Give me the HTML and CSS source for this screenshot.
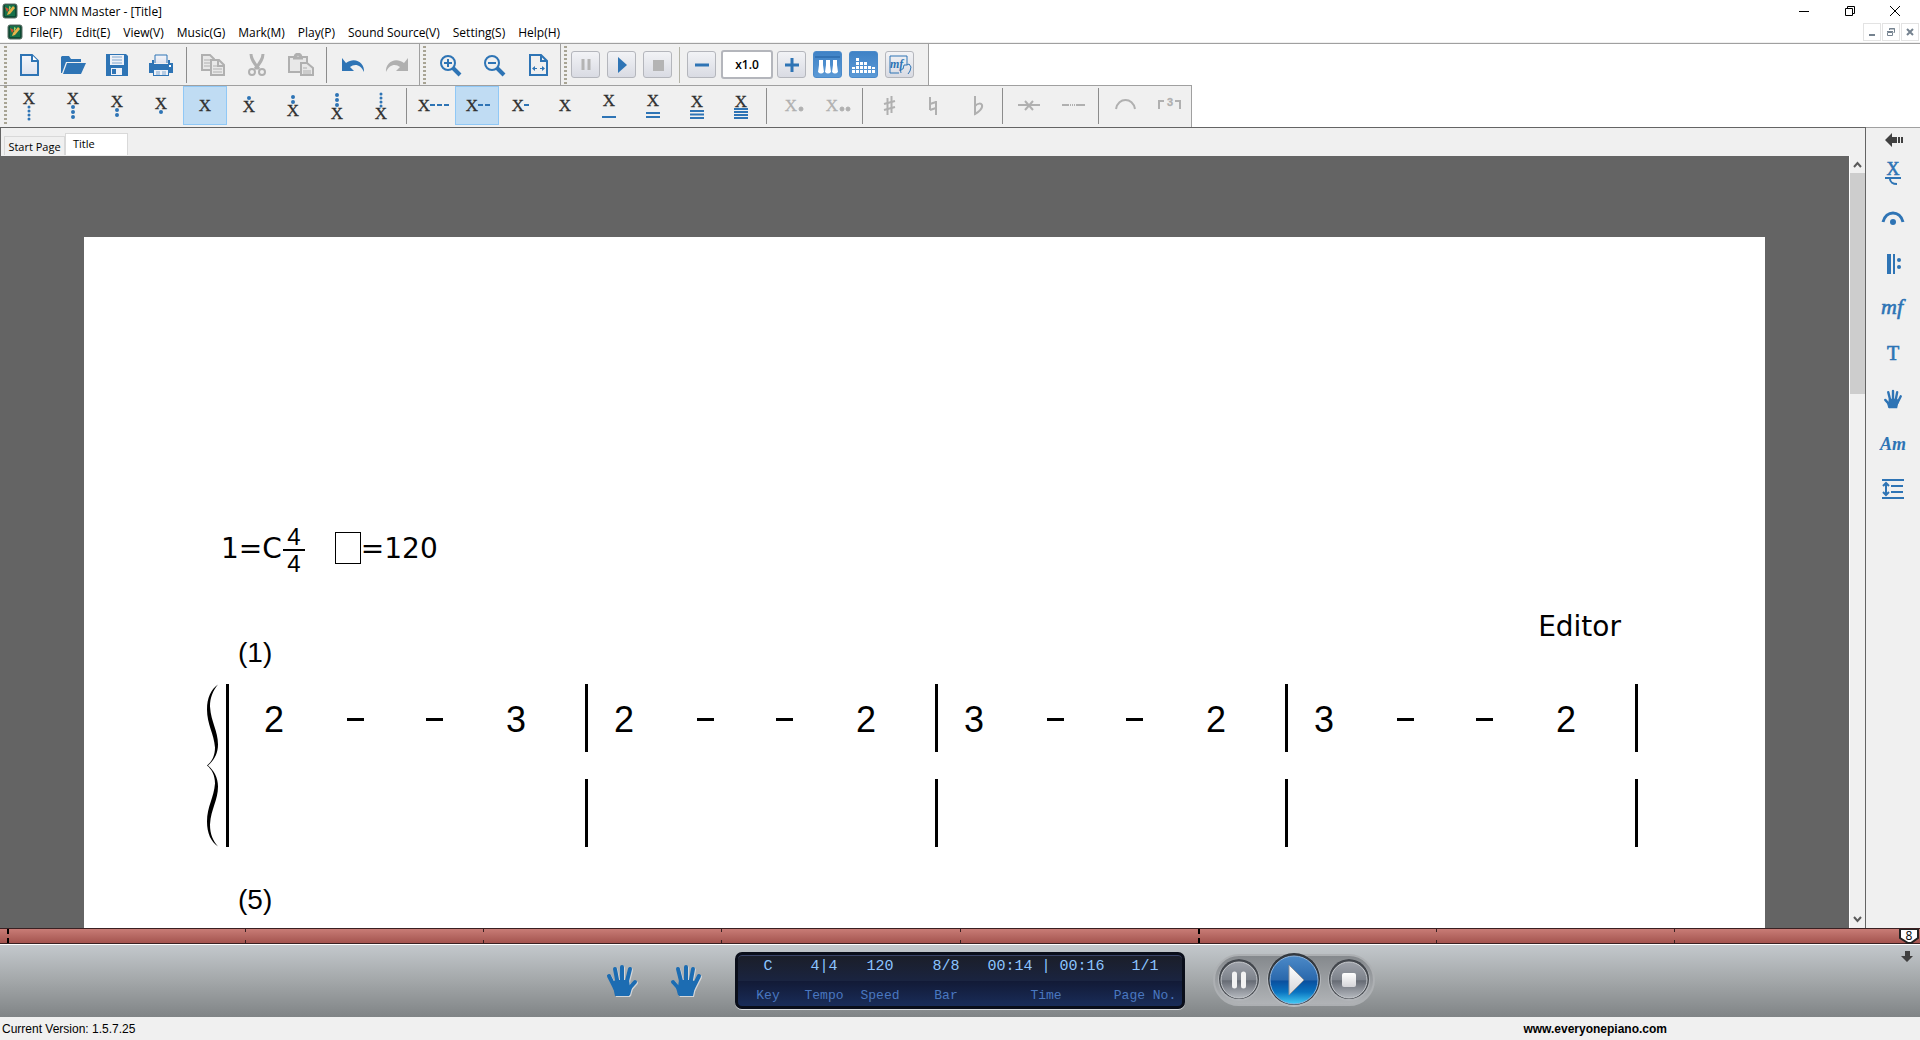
FILE: index.html
```html
<!DOCTYPE html>
<html lang="en">
<head>
<meta charset="utf-8">
<title>EOP NMN Master - [Title]</title>
<link rel="stylesheet" href="styles.css">
</head>
<body>
<svg class="defs" aria-hidden="true">
  <defs>
    <symbol id="logo" viewBox="0 0 16 16">
      <rect x="1" y="1" width="14" height="14" rx="2" fill="#0d4a33" stroke="#5d6f66"/>
      <rect x="3" y="2" width="10" height="11" fill="#16704a"/>
      <path d="M6 9l5-6 2 2-5 6-3 1z" fill="#e9b44a"/>
      <path d="M3 4l4 2-2 3z" fill="#d5502c"/>
      <path d="M7 3l2 1-2 4z" fill="#9fd46a"/>
    </symbol>
    <symbol id="hand" viewBox="0 0 32 34">
      <g fill="none" stroke="currentColor" stroke-width="4" stroke-linecap="round">
        <path d="M3 12l6 12M9 5l3 16M16 3v18M24 5l-4 16"/>
        <path d="M29 18l-8 9"/>
      </g>
      <path d="M6 18l4-2h13l1 7-1 9H9z" fill="currentColor"/>
      <path d="M23 22l4-2-3 11-2 1z" fill="currentColor"/>
    </symbol>
    <linearGradient id="paper" x1="0" y1="0" x2="0" y2="1"><stop offset="0" stop-color="#f4f6fb"/><stop offset="1" stop-color="#dfe3ee"/></linearGradient>
    <linearGradient id="steel" x1="0" y1="0" x2="0" y2="1"><stop offset="0" stop-color="#9ea2aa"/><stop offset=".5" stop-color="#7d828b"/><stop offset=".52" stop-color="#666b74"/><stop offset="1" stop-color="#b4b8be"/></linearGradient>
    <linearGradient id="blue" x1="0" y1="0" x2="0" y2="1"><stop offset="0" stop-color="#4c8ac8"/><stop offset=".5" stop-color="#2a68ac"/><stop offset=".52" stop-color="#0a4f9e"/><stop offset=".75" stop-color="#0a73c0"/><stop offset="1" stop-color="#45cdf5"/></linearGradient>
    <linearGradient id="white" x1="0" y1="0" x2="0" y2="1"><stop offset="0" stop-color="#fff"/><stop offset="1" stop-color="#d4d4d8"/></linearGradient>
  </defs>
</svg>

<header class="titlebar">
  <svg class="logo"><use href="#logo"/></svg>
  <h1 class="caption">EOP NMN Master - [Title]</h1>
  <div class="window-buttons">
    <button aria-label="Minimize"><svg width="12" height="12"><path d="M1 6.500h10" stroke="#000"/></svg></button>
    <button aria-label="Restore"><svg width="12" height="12" fill="none" stroke="#000"><path d="M1.500 3.500h7v7h-7zM3.500 3v-1.500h7v7H9"/></svg></button>
    <button aria-label="Close"><svg width="12" height="12"><path d="M1 1l10 10M11 1L1 11" stroke="#000"/></svg></button>
  </div>
</header>

<nav class="menubar">
  <svg class="logo"><use href="#logo"/></svg>
  <div class="menus">
    <button>File(F)</button><button>Edit(E)</button><button>View(V)</button><button>Music(G)</button><button>Mark(M)</button><button>Play(P)</button><button>Sound Source(V)</button><button>Setting(S)</button><button>Help(H)</button>
  </div>
  <div class="child-buttons">
    <button aria-label="Minimize document"><svg width="10" height="10"><path d="M2 8h6" stroke="#75828f" stroke-width="2"/></svg></button>
    <button aria-label="Restore document"><svg width="10" height="10" fill="none" stroke="#75828f"><path d="M1.500 5.500h5v3h-5zM1 4.500h6M3.500 3V1.500h5v4H7.500M3 2h6"/></svg></button>
    <button aria-label="Close document"><svg width="10" height="10"><path d="M2 2l6 6M8 2L2 8" stroke="#75828f" stroke-width="2"/></svg></button>
  </div>
</nav>

<div class="toolrow">
  <div class="toolbar">
    <i class="grip"></i>
    <button class="tool" aria-label="New"><svg class="icon" viewBox="0 0 28 24"><path d="M6 2h11l6 6v14H6z" fill="url(#paper)" stroke="#2e74b5" stroke-width="2"/><path d="M17 2v6h6" fill="#fff" stroke="#2e74b5" stroke-width="2"/></svg></button>
    <button class="tool" aria-label="Open"><svg class="icon" viewBox="0 0 28 24" fill="#2e74b5"><path d="M2 20V4l1-1h7l2 3h10v3H7L3 20z"/><path d="M8 10h19l-5 11H4z"/></svg></button>
    <button class="tool" aria-label="Save"><svg class="icon" viewBox="0 0 28 24"><path d="M3 1h20l2 2v20H3z" fill="#2e74b5"/><path d="M7 2h14v10H7z" fill="#eef1f7"/><path d="M9 4h10M9 7h10M9 10h10" stroke="#7fa6cf"/><path d="M8 15h11v7H8z" fill="#eef1f7"/><path d="M9 16h4v5H9z" fill="#2e74b5"/></svg></button>
    <button class="tool" aria-label="Print"><svg class="icon" viewBox="0 0 28 24"><path d="M8 10V2h12v8" fill="url(#paper)" stroke="#2e74b5"/><path d="M5 7h2v4h14V7h2v3h3v10h-4v3H6v-3H2V10h3z" fill="#2e74b5"/><path d="M7 17h14v5H7z" fill="#eef1f7"/><path d="M9 19h4M15 19h4M9 21h4M15 21h4" stroke="#7fa6cf"/><path d="M22 12h2v2h-2z" fill="#fff"/></svg></button>
    <i class="sep"></i>
    <button class="tool" aria-label="Copy" disabled><svg class="icon" viewBox="0 0 28 24" fill="#e8e8e8" stroke="#b0b0b0" stroke-width="2"><path d="M3 2h8l4 4v11H3z"/><path d="M5 7h6M5 10h6M5 13h6" stroke-width="1"/><path d="M12 7h8l5 5v10H12z"/><path d="M19 7v6h6" fill="none"/><path d="M14 13h4M14 16h9M14 19h9" stroke-width="1"/></svg></button>
    <button class="tool" aria-label="Cut" disabled><svg class="icon" viewBox="0 0 28 24" fill="none" stroke="#b0b0b0" stroke-width="2"><path d="M8 1c0 5 3 9 8 15M20 1c0 5-3 9-8 15" stroke-width="3"/><circle cx="9" cy="19" r="3"/><circle cx="19" cy="19" r="3"/></svg></button>
    <button class="tool" aria-label="Paste" disabled><svg class="icon" viewBox="0 0 28 24" fill="#e8e8e8" stroke="#b0b0b0" stroke-width="2"><path d="M2 4h18v15H2z"/><path d="M6 5h10M8 5c0-5 6-5 6 0" stroke-width="3"/><path d="M14 10h6l6 5v7H14z"/><path d="M16 15h4M16 18h8M16 20h8" stroke-width="1"/></svg></button>
    <i class="sep"></i>
    <button class="tool" aria-label="Undo"><svg class="icon" viewBox="0 0 28 24" fill="#2e74b5"><path d="M3 5v13h12l-4-4c5-4 11-2 14 5 1-9-9-16-18-9z"/></svg></button>
    <button class="tool" aria-label="Redo" disabled><svg class="icon" viewBox="0 0 28 24" fill="#b0b0b0"><path d="M25 5v13H13l4-4c-5-4-11-2-14 5C2 10 12 3 21 10z"/></svg></button>
  </div>
  <div class="toolbar">
    <i class="grip"></i>
    <button class="tool" aria-label="Zoom in"><svg class="icon" viewBox="0 0 28 24" fill="none" stroke="#2e74b5"><circle cx="12" cy="10" r="7" stroke-width="2"/><path d="M8 10h8M12 6v8" stroke-width="2"/><path d="M17 15l7 7" stroke-width="4"/></svg></button>
    <button class="tool" aria-label="Zoom out"><svg class="icon" viewBox="0 0 28 24" fill="none" stroke="#2e74b5"><circle cx="12" cy="10" r="7" stroke-width="2"/><path d="M8 10h8" stroke-width="2"/><path d="M17 15l7 7" stroke-width="4"/></svg></button>
    <button class="tool" aria-label="Fit width"><svg class="icon" viewBox="0 0 28 24" fill="none" stroke="#2e74b5" stroke-width="2"><path d="M6 2h11l6 6v14H6z"/><path d="M17 2v6h6"/><path d="M9 15.500h4M16 15.500h4" stroke-width="1"/><path d="M11 13l-3 2.500 3 2.500zM18 13l3 2.500-3 2.500z" fill="#2e74b5" stroke="none"/></svg></button>
  </div>
  <div class="toolbar play-tools">
    <i class="grip"></i>
    <button class="key" aria-label="Pause" disabled><svg width="18" height="18"><path d="M6 3v11M12 3v11" stroke="#b4b4b4" stroke-width="3"/></svg></button>
    <button class="key" aria-label="Play"><svg width="18" height="18"><path d="M5 1l9 8-9 8z" fill="#2e74b5"/></svg></button>
    <button class="key" aria-label="Stop" disabled><svg width="18" height="18"><path d="M4 4h11v11H4z" fill="#b4b4b4"/></svg></button>
    <i class="sep"></i>
    <button class="key" aria-label="Slower"><svg width="18" height="18"><path d="M2 9h14" stroke="#2e74b5" stroke-width="3"/></svg></button>
    <input class="rate" type="text" value="x1.0" aria-label="Playback speed">
    <button class="key" aria-label="Faster"><svg width="18" height="18"><path d="M2 9h14M9 2v14" stroke="#2e74b5" stroke-width="3"/></svg></button>
    <button class="key on" aria-label="Keyboard"><svg width="25" height="23"><path d="M0 4h25" stroke="#3272b4" stroke-width="2"/><path d="M4 7h4v5l1 7q-3 3-6 0l1-7zM11 7h4v5l1 7q-3 3-6 0l1-7zM18 7h4v5l1 7q-3 3-6 0l1-7z" fill="#fff"/></svg></button>
    <button class="key on" aria-label="Spectrum"><svg width="25" height="23" stroke="#fff" stroke-width="3"><g stroke-dasharray="3 1"><path d="M2.500 20v-6M6.500 20V4M10.500 20v-11M14.500 20V8M18.500 20v-7M22.500 20v-6"/></g></svg></button>
    <button class="key" aria-label="Dynamics by hand"><svg width="25" height="23" fill="none" stroke="#2e74b5"><path d="M20 12V3H3v17h9"/><text x="3" y="15" class="mini-mf">mf</text><path d="M14 20c-1-3 0-4 2-4l1-4 3 0 2-1 2 3-1 4-2 3"/></svg></button>
  </div>
</div>

<div class="toolrow second">
  <div class="toolbar notes">
    <i class="grip"></i>
    <button class="tool" aria-label="Four octaves down"><svg class="note"><text x="22" y="17">X</text><path class="dots small" d="M22 20v13"/></svg></button>
    <button class="tool" aria-label="Three octaves down"><svg class="note"><text x="22" y="17">X</text><path class="dots" d="M22 20v11"/></svg></button>
    <button class="tool" aria-label="Two octaves down"><svg class="note"><text x="22" y="20">X</text><path class="dots" d="M22 23v6"/></svg></button>
    <button class="tool" aria-label="One octave down"><svg class="note"><text x="22" y="22">X</text><path class="dots" d="M22 25v1"/></svg></button>
    <button class="tool selected" aria-label="Middle octave"><svg class="note"><text x="22" y="24">X</text></svg></button>
    <button class="tool" aria-label="One octave up"><svg class="note"><path class="dots" d="M22 11v1"/><text x="22" y="25">X</text></svg></button>
    <button class="tool" aria-label="Two octaves up"><svg class="note"><path class="dots" d="M22 10v6"/><text x="22" y="29">X</text></svg></button>
    <button class="tool" aria-label="Three octaves up"><svg class="note"><path class="dots" d="M22 8v11"/><text x="22" y="32">X</text></svg></button>
    <button class="tool" aria-label="Four octaves up"><svg class="note"><path class="dots small" d="M22 7v13"/><text x="22" y="32">X</text></svg></button>
    <i class="sep"></i>
    <button class="tool" aria-label="Whole note"><svg class="note"><text x="13" y="24">X</text><path class="dash" d="M19 18h20"/></svg></button>
    <button class="tool selected" aria-label="Dotted half note"><svg class="note"><text x="17" y="24">X</text><path class="dash" d="M23 18h13"/></svg></button>
    <button class="tool" aria-label="Half note"><svg class="note"><text x="19" y="24">X</text><path class="dash" d="M25 18h5"/></svg></button>
    <button class="tool" aria-label="Quarter note"><svg class="note"><text x="22" y="24">X</text></svg></button>
    <button class="tool" aria-label="Eighth note"><svg class="note"><text x="22" y="19">X</text><path class="line" d="M15 30h14"/></svg></button>
    <button class="tool" aria-label="Sixteenth note"><svg class="note"><text x="22" y="19">X</text><path class="line" d="M15 26h14M15 30h14"/></svg></button>
    <button class="tool" aria-label="Thirty-second note"><svg class="note"><text x="22" y="20">X</text><path class="line" d="M15 24h14M15 27.500h14M15 31h14"/></svg></button>
    <button class="tool" aria-label="Sixty-fourth note"><svg class="note"><text x="22" y="20">X</text><path class="line" d="M15 22h14M15 25h14M15 28h14M15 31h14"/></svg></button>
    <i class="sep"></i>
    <button class="tool" aria-label="Dotted" disabled><svg class="note"><text x="20" y="24">X</text><circle cx="30" cy="22" r="2"/></svg></button>
    <button class="tool" aria-label="Double dotted" disabled><svg class="note"><text x="17" y="24">X</text><circle cx="27" cy="22" r="2"/><circle cx="33" cy="22" r="2"/></svg></button>
    <i class="sep"></i>
    <button class="tool" aria-label="Sharp" disabled><svg class="note"><path class="gray" d="M20.500 11v17M24.500 9v17"/><path class="gray" d="M17 17l11-3M17 23l11-3"/></svg></button>
    <button class="tool" aria-label="Natural" disabled><svg class="note"><path class="gray" d="M19 10v13M25 14v14"/><path class="gray" d="M19 17l6-2M19 23l6-2"/></svg></button>
    <button class="tool" aria-label="Flat" disabled><svg class="note"><path class="gray" d="M20 9v18c4-2 8-6 7-9-1-2-4-2-7 1"/></svg></button>
    <i class="sep"></i>
    <button class="tool" aria-label="Rest tie" disabled><svg class="note"><path class="gray" d="M11 18h22"/><path class="gray" d="M18 14l8 9M26 14l-8 9"/></svg></button>
    <button class="tool" aria-label="Dashed line" disabled><svg class="note"><path class="gray" d="M11 18h7M26 18h8"/><path class="gray" d="M19 18h7" stroke-dasharray="1 1"/></svg></button>
    <i class="sep"></i>
    <button class="tool" aria-label="Slur" disabled><svg class="note"><path class="gray" d="M13 22c2-12 17-12 19 0"/></svg></button>
    <button class="tool" aria-label="Triplet" disabled><svg class="note"><path class="gray" d="M12 22v-8h5M28 14h5v8"/><text class="three" x="23" y="19">3</text></svg></button>
  </div>
</div>

<main class="main">
  <section class="document">
    <div class="tabs" role="tablist">
      <button class="tab" role="tab">Start Page</button>
      <button class="tab current" role="tab" aria-selected="true">Title</button>
    </div>
    <div class="viewport">
      <div class="canvas">
        <article class="sheet">
          <div class="signature">
            <span>1=C</span>
            <span class="meter"><span>4</span><span>4</span></span>
            <i class="beat"></i>
            <span>=120</span>
          </div>
          <p class="editor">Editor</p>
          <p class="number">(1)</p>
          <div class="system">
            <svg class="brace" viewBox="0 0 11 162"><path d="M11 0C4 5 0 13 0 25c0 15 7 24 8 38 0 8-3 14-8 18 5 4 8 10 8 18-1 14-8 23-8 38 0 12 4 20 11 25-5-6-8-12-8-22 1-16 8-24 8-38 0-9-4-16-10-21 6-5 10-12 10-21 0-14-7-22-8-38C3 13 6 6 11 0z"/></svg>
            <div class="staves">
              <div class="staff">
                <div class="measure"><b>2</b><b class="hold"></b><b class="hold"></b><b>3</b></div>
                <div class="measure"><b>2</b><b class="hold"></b><b class="hold"></b><b>2</b></div>
                <div class="measure"><b>3</b><b class="hold"></b><b class="hold"></b><b>2</b></div>
                <div class="measure"><b>3</b><b class="hold"></b><b class="hold"></b><b>2</b></div>
              </div>
              <div class="staff">
                <div class="measure"></div><div class="measure"></div><div class="measure"></div><div class="measure"></div>
              </div>
            </div>
          </div>
          <p class="number">(5)</p>
        </article>
      </div>
      <div class="scrollbar">
        <button aria-label="Scroll up"><svg width="9" height="17"><path d="M1 11l3.500-4L8 11" fill="none" stroke="#5a5a5a" stroke-width="2"/></svg></button>
        <div class="track"><div class="thumb"></div></div>
        <button aria-label="Scroll down"><svg width="9" height="17"><path d="M1 6l3.500 4L8 6" fill="none" stroke="#5a5a5a" stroke-width="2"/></svg></button>
      </div>
    </div>
  </section>
  <aside class="sidebar">
    <button class="collapse" aria-label="Collapse panel"><svg width="18" height="14"><path d="M0 7l7-7v4h5v6H7v4zM13 4h2v6h-2zM16 4h2v6h-2z" fill="#404040"/></svg></button>
    <button aria-label="Grace note"><svg class="side" viewBox="0 0 28 28"><text class="heavy" x="14" y="15" font-size="18">X</text><path d="M6 18h16M11 19c0 3 3 5 7 5" fill="none" stroke="#2e74b5" stroke-width="2"/></svg></button>
    <button aria-label="Fermata"><svg class="side" viewBox="0 0 28 28"><path d="M4 17C7 5 21 5 24 17" fill="none" stroke="#2e74b5" stroke-width="3"/><circle cx="14" cy="17" r="3"/></svg></button>
    <button aria-label="Repeat"><svg class="side" viewBox="0 0 28 28"><path d="M8 4h4v20H8zM14 4h2v20h-2z"/><circle cx="20" cy="10" r="2"/><circle cx="20" cy="17" r="2"/></svg></button>
    <button aria-label="Dynamics"><svg class="side" viewBox="0 0 28 28"><text class="slant heavy" x="13" y="19" font-size="22">mf</text></svg></button>
    <button aria-label="Text"><svg class="side" viewBox="0 0 28 28"><text class="heavy" x="14" y="20" font-size="20">T</text></svg></button>
    <button aria-label="Fingering"><svg class="side flip" viewBox="-6 -7 44 47"><use href="#hand" width="32" height="34"/></svg></button>
    <button aria-label="Chord"><svg class="side" viewBox="0 0 28 28"><text class="slant bold" x="14" y="20" font-size="18">Am</text></svg></button>
    <button aria-label="Line spacing"><svg class="side" viewBox="0 0 28 28" fill="none" stroke="#2e74b5" stroke-width="2"><path d="M3 5h22M12 11h12M12 17h12M3 23h22"/><path d="M7 8v12M4 11l3-3 3 3M4 17l3 3 3-3" fill="none"/></svg></button>
  </aside>
</main>

<div class="timeline">
  <i class="tick strong"></i><i class="tick"></i><i class="tick"></i><i class="tick"></i><i class="tick"></i><i class="tick strong"></i><i class="tick"></i><i class="tick"></i>
  <span class="marker"><svg width="20" height="15"><path d="M1 0h18v9l-7 5H9l-8-5z" fill="#fff" stroke="#222" stroke-width="2"/></svg><span>8</span></span>
</div>

<footer class="player">
  <div class="hands">
    <button aria-label="Left hand"><svg width="32" height="34"><use href="#hand"/></svg></button>
    <button aria-label="Right hand"><svg class="flip" width="32" height="34"><use href="#hand"/></svg></button>
  </div>
  <dl class="lcd">
    <div><dd>C</dd><dt>Key</dt></div>
    <div><dd>4|4</dd><dt>Tempo</dt></div>
    <div><dd>120</dd><dt>Speed</dt></div>
    <div><dd>8/8</dd><dt>Bar</dt></div>
    <div><dd>00:14 | 00:16</dd><dt>Time</dt></div>
    <div><dd>1/1</dd><dt>Page No.</dt></div>
  </dl>
  <div class="transport">
    <button aria-label="Pause playback"><svg width="44" height="44"><circle cx="22" cy="22" r="21" fill="#b2b5b9"/><circle cx="22" cy="21" r="20" fill="#43474d"/><circle cx="22" cy="22" r="18" fill="url(#steel)" stroke="#c6c9cd"/><path d="M17.500 16v12M26.500 16v12" stroke="#f3f3f3" stroke-width="5" stroke-linecap="round"/></svg></button>
    <button aria-label="Play score"><svg width="56" height="56"><circle cx="28" cy="28" r="27" fill="#b7babe"/><circle cx="28" cy="27" r="26" fill="#34393f"/><circle cx="28" cy="28" r="24" fill="url(#blue)" stroke="#8fb4dc"/><path d="M23 13l15 15-15 15z" fill="url(#white)" stroke="#8a9099" stroke-width="1"/></svg></button>
    <button aria-label="Stop playback"><svg width="44" height="44"><circle cx="22" cy="22" r="21" fill="#b2b5b9"/><circle cx="22" cy="21" r="20" fill="#43474d"/><circle cx="22" cy="22" r="18" fill="url(#steel)" stroke="#c6c9cd"/><rect x="15" y="15" width="14" height="14" rx="2" fill="url(#white)"/></svg></button>
  </div>
  <button class="dock" aria-label="Hide player"><svg width="12" height="11"><path d="M4 0h5v5h3l-6 6-6-6h4z" fill="#404040"/></svg></button>
</footer>

<div class="status">
  <span>Current Version: 1.5.7.25</span>
  <a href="#home">www.everyonepiano.com</a>
</div>
</body>
</html>
```
FILE: styles.css
```css
* { box-sizing: border-box; }
html { height: 100%; overflow: hidden; }
body {
  margin: 0;
  height: 100%;
  display: flex;
  flex-direction: column;
  overflow: hidden;
  background: #fff;
  color: #000;
  font: 12px/16px "Open Sans", "Noto Sans", sans-serif;
}
button { margin: 0; padding: 0; border: 0; background: none; font: inherit; color: inherit; }
svg { display: block; flex: none; }
p, dl, dd, h1 { margin: 0; }
.defs { position: absolute; width: 0; height: 0; }
.logo { width: 16px; height: 16px; }

/* window caption and menus */
.titlebar { display: flex; align-items: center; height: 22px; padding-left: 2px; gap: 5px; }
.caption { flex: 1; padding-top: 1px; font-size: 12px; font-weight: 400; }
.window-buttons { display: flex; padding-right: 1px; }
.window-buttons button { width: 46px; height: 22px; display: flex; align-items: center; justify-content: center; padding-bottom: 1px; }
.window-buttons button:last-child { padding-right: 2px; }
.menubar { display: flex; align-items: center; height: 21px; padding-left: 7px; border-bottom: 1px solid #f0f0f0; }
.menus { flex: 1; display: flex; gap: 13px; padding: 2px 0 0 7px; }
.child-buttons { display: flex; gap: 1px; padding-right: 1px; }
.child-buttons button { width: 18px; height: 18px; border: 1px solid #e3e3e3; display: flex; align-items: center; justify-content: center; }

/* toolbars */
.toolrow { display: flex; height: 42px; border-top: 1px solid #a0a0a0; }
.toolbar { display: flex; align-items: center; background: #f0f0f0; border-right: 1px solid #a0a0a0; }
.second { border-top: 0; }
.notes { border-top: 1px solid #a0a0a0; align-items: flex-start; }
.grip { width: 3px; height: 38px; background: repeating-linear-gradient(#a8a494 0 2px, #f0f0f0 2px 4px); }
.toolbar:first-child .grip { margin-left: 4px; }
.toolbar + .toolbar .grip { margin: 0 2px 0 3px; }
.sep { width: 1px; height: 36px; margin: 0 4px 0 3px; background: #8c8c8c; }
.notes .sep { margin-top: 2px; }
.tool { width: 44px; height: 39px; display: flex; align-items: center; justify-content: center; }
.icon { width: 28px; height: 24px; }
.selected { background: #c0dcf3; border: 1px solid #90c8f6; }
.play-tools { gap: 7px; padding-right: 14px; }
.toolbar + .play-tools .grip { margin: 0 -3px 0 3px; }
.play-tools .sep { margin: 0; background: #b4b4a8; }
.key { width: 29px; height: 27px; border: 1px solid #b4b6bc; border-radius: 3px; background: linear-gradient(#f2f3f6, #d9dbe3); display: flex; align-items: center; justify-content: center; }
.on { background: linear-gradient(#3f82c6, #5c9ad6); border-color: #4a8aca; }
.rate { width: 52px; height: 29px; margin: 0 -3px 0 -2px; padding: 0; border: 2px solid #b4b6bc; border-radius: 3px; background: #fff; text-align: center; font: 600 12px/16px "Open Sans", sans-serif; color: #000; }
.mini-mf { font: italic bold 12px "Liberation Serif", serif; fill: #2e74b5; stroke: none; }
.note { width: 44px; height: 38px; }
.note text { font: 17px "Liberation Serif", serif; fill: #303030; stroke: #303030; stroke-width: .3; text-anchor: middle; }
.selected .note { margin: -1px; }
.dots { stroke: #2e74b5; stroke-width: 4; stroke-dasharray: 0 5; stroke-linecap: round; }
.small { stroke-width: 3; stroke-dasharray: 0 4; }
.dash { stroke: #2e74b5; stroke-width: 2; stroke-dasharray: 5 2; }
.line { stroke: #2e74b5; stroke-width: 2; }
.gray { fill: none; stroke: #b0b0b0; stroke-width: 2; }
:disabled .note text, :disabled .note circle { fill: #b0b0b0; stroke: #b0b0b0; }
.note .three { font: bold 11px "Liberation Sans", sans-serif; }

/* document area */
.main { flex: 1; min-height: 0; display: flex; }
.document { flex: 1; min-width: 0; display: flex; flex-direction: column; border: 1px solid #646464; border-bottom: 0; }
.tabs { display: flex; align-items: flex-end; height: 28px; padding: 0 0 1px 3px; background: #f0f0f0; }
.tab { height: 19px; width: 61px; padding-top: 2px; border: 1px solid #d9d9d9; border-bottom: 0; font: 11px/16px "Open Sans", sans-serif; white-space: nowrap; }
.current { height: 22px; width: 63px; background: #fff; text-align: left; padding: 0 0 2px 7px; }
.viewport { flex: 1; min-height: 0; display: flex; background: #646464; }
.canvas { flex: 1; min-width: 0; overflow: hidden; padding: 81px 84px 0 83px; }
.sheet { background: #fff; min-height: 900px; padding: 288px 127px 0 123px; }
.signature { display: flex; align-items: center; height: 48px; padding-left: 14px; font: 28px/32px "DejaVu Sans", sans-serif; }
.meter { display: flex; flex-direction: column; align-items: center; width: 22px; margin-left: 1px; padding-top: 2px; font: 24px/25px "Liberation Sans", sans-serif; }
.meter span:first-child { border-bottom: 2px solid #000; padding: 0 4px; }
.beat { width: 26px; height: 32px; margin: 0 0 3px 30px; border: 1px solid #000; }
.editor { margin-top: 38px; padding-right: 17px; text-align: right; font: 28px/32px "DejaVu Sans", sans-serif; }
.number { padding-left: 31px; font: 28px/32px "Liberation Sans", sans-serif; }
.editor + .number { margin: -6px 0 15px; }
.system { display: flex; gap: 8px; margin-bottom: 37px; }
.brace { width: 11px; height: 163px; }
.staves { flex: 1; display: flex; flex-direction: column; gap: 27px; border-left: 3px solid #000; }
.staff { display: grid; grid-template-columns: 359fr 350fr 350fr 350fr; height: 68px; }
.measure { display: flex; align-items: center; justify-content: space-between; padding: 3px 59px 0 26px; border-right: 3px solid #000; font: 36px/40px "Liberation Sans", sans-serif; }
.measure:first-child { padding-left: 35px; }
.measure b { width: 20px; text-align: center; font-weight: 400; }
.measure .hold { width: 17px; height: 3px; background: #000; }
.scrollbar { width: 16px; display: flex; flex-direction: column; background: #f0f0f0; border-left: 1px solid #fff; }
.scrollbar button { height: 17px; display: flex; justify-content: center; }
.track { flex: 1; }
.thumb { height: 30%; min-height: 20px; background: #cdcdcd; }
.track, .scrollbar { min-height: 0; }
.sidebar { width: 54px; background: #f0f0f0; border-top: 1px solid #a0a0a0; display: flex; flex-direction: column; align-items: center; }
.sidebar button { height: 45px; display: flex; align-items: center; color: #2e74b5; }
.sidebar .collapse { height: 23px; padding-left: 2px; }
.side { width: 28px; height: 28px; fill: #2e74b5; }
.side text { font-family: "Liberation Serif", serif; text-anchor: middle; }
.heavy { stroke: #2e74b5; stroke-width: .6; }
.slant { font-style: italic; }
.bold { font-weight: 700; }
.flip { transform: scaleX(-1); }

/* progress ruler */
.timeline { position: relative; height: 16px; display: flex; padding-left: 7px; background: linear-gradient(#c87c76, #a4544f); border: solid #3a2022; border-width: 1px 0; }
.tick { width: calc(100% / 8 - 1px); background: linear-gradient(#3a2022 0 3px, transparent 3px 11px, #3a2022 11px) no-repeat 0 0 / 1px 100%; }
.strong { background-image: linear-gradient(#000 0 5px, transparent 5px 9px, #000 9px); background-size: 2px 100%; }
.marker { position: absolute; right: 1px; top: 0; }
.marker span { position: absolute; inset: 0; text-align: center; font: 12px/13px "Open Sans", sans-serif; }

/* player */
.player { position: relative; display: grid; grid-template-columns: 1fr 450px 1fr; height: 73px; border-top: 1px solid #fff; background: linear-gradient(#c3c8cc, #a3a7a9 50%, #808486); }
.hands { display: flex; justify-content: flex-end; gap: 32px; padding: 19px 33px 0 0; color: #1c6cb2; }
.hands button { height: 34px; filter: drop-shadow(1px 1px 0 #d4d6d8); }
.lcd { display: grid; grid-template-columns: 56px 56px 56px 76px 124px 74px; margin-top: 7px; height: 57px; padding: 0 2px; border: 3px solid #0a0e1a; border-radius: 7px; background: linear-gradient(#1b1e28, #1a2440 50%, #121a36 51%, #192c58); box-shadow: 0 1px 0 #d9dbdd, inset 0 1px 0 #3a4468; text-align: center; white-space: nowrap; }
.lcd dd { padding-top: 3px; color: #8cc4ff; font: 15px/18px "Liberation Mono", monospace; }
.lcd dt { padding-top: 11px; color: #4a78c0; font: 13px/18px "Liberation Mono", monospace; }
.transport { display: flex; align-items: center; justify-content: space-between; width: 162px; height: 52px; margin: 9px 0 0 28px; padding: 0 2px; border: 2px solid #adb0b3; border-radius: 26px; background: linear-gradient(#85898d, #b0b3b6); }
.dock { position: absolute; right: 7px; top: 6px; }

.status { display: flex; justify-content: space-between; align-items: center; height: 23px; padding: 0 253px 0 2px; background: #f0f0f0; font: 12px/16px "Liberation Sans", sans-serif; }
.status a { color: #000; font-weight: 700; text-decoration: none; }
```
